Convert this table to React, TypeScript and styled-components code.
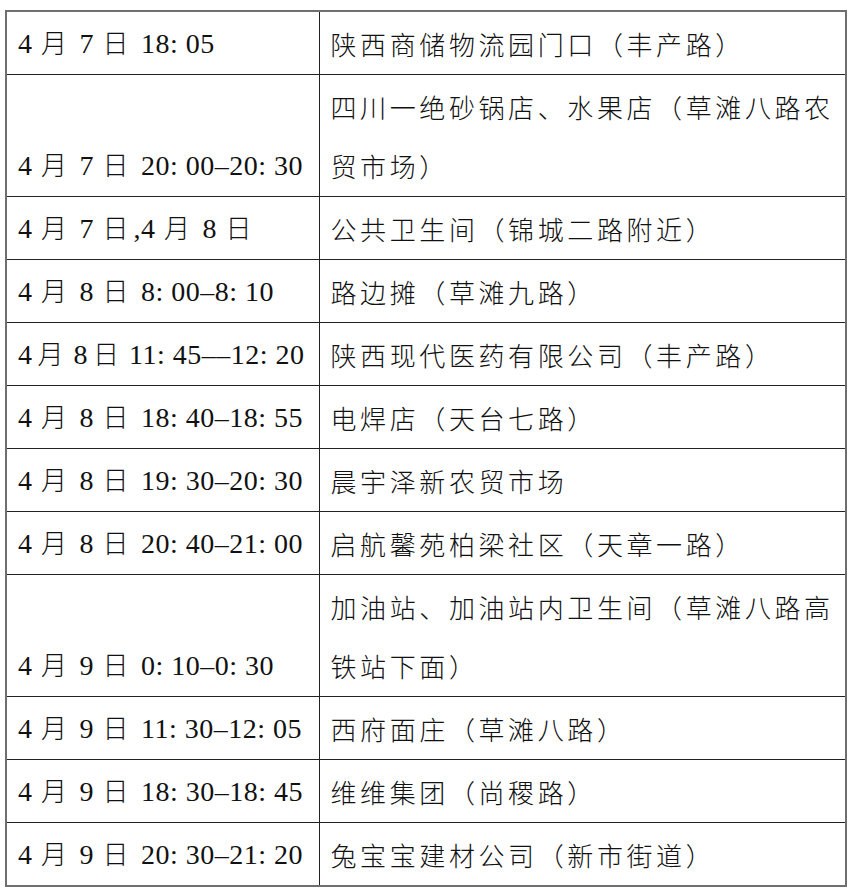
import styled, { createGlobalStyle } from "styled-components";

const rows = [
  { when: "4 月 7 日 18: 05", where: "陕西商储物流园门口（丰产路）" },
  { when: "4 月 7 日 20: 00–20: 30", where: "四川一绝砂锅店、水果店（草滩八路农贸市场）" },
  { when: "4 月 7 日,4 月 8 日", where: "公共卫生间（锦城二路附近）" },
  { when: "4 月 8 日 8: 00–8: 10", where: "路边摊（草滩九路）" },
  { when: "4月8日11: 45––12: 20", where: "陕西现代医药有限公司（丰产路）" },
  { when: "4 月 8 日 18: 40–18: 55", where: "电焊店（天台七路）" },
  { when: "4 月 8 日 19: 30–20: 30", where: "晨宇泽新农贸市场" },
  { when: "4 月 8 日 20: 40–21: 00", where: "启航馨苑柏梁社区（天章一路）" },
  { when: "4 月 9 日 0: 10–0: 30", where: "加油站、加油站内卫生间（草滩八路高铁站下面）" },
  { when: "4 月 9 日 11: 30–12: 05", where: "西府面庄（草滩八路）" },
  { when: "4 月 9 日 18: 30–18: 45", where: "维维集团（尚稷路）" },
  { when: "4 月 9 日 20: 30–21: 20", where: "兔宝宝建材公司（新市街道）" },
];

const HAN = /([\u4e00-\u9fff]+)/;

// chinese chars between digits get a little air, like word does
const renderWhen = (s: string) => {
  const parts = s.split(HAN);
  return parts.map((part, i) => {
    if (!HAN.test(part)) return part;
    const prev = parts[i - 1] ?? "";
    const next = parts[i + 1] ?? "";
    return (
      <Han key={i} $gapL={/[0-9]$/.test(prev)} $gapR={/^[0-9]/.test(next)}>
        {part}
      </Han>
    );
  });
};

export default function App() {
  return (
    <>
      <GlobalStyle />
      <Page>
        <Table>
          <colgroup>
            <col style={{ width: 313 }} />
            <col />
          </colgroup>
          <tbody>
            {rows.map((r, i) => (
              <tr key={i}>
                <When>{renderWhen(r.when)}</When>
                <Where>{r.where}</Where>
              </tr>
            ))}
          </tbody>
        </Table>
      </Page>
    </>
  );
}

const GlobalStyle = createGlobalStyle`
  body {
    margin: 0;
    background: #fff;
    color: #111;
  }
`;

const Page = styled.div`
  padding: 10px 0 0 5px;
`;

const Table = styled.table`
  width: 842px;
  table-layout: fixed;
  border-collapse: collapse;
  border: 2px solid #6f6f6f;
`;

const Cell = styled.td`
  border: 1px solid #222;
  padding: 2px 2px 1px 12px;
  line-height: 59px;
  height: 59px;
  box-sizing: content-box;
`;

const When = styled(Cell)`
  vertical-align: bottom;
  padding-left: 11px;
  font-family: "Liberation Serif", "Noto Sans CJK SC", serif;
  font-size: 28px;
  letter-spacing: 0.5px;
  white-space: nowrap;
`;

const Han = styled.span<{ $gapL: boolean; $gapR: boolean }>`
  font-family: "Noto Sans CJK SC", sans-serif;
  font-weight: 300;
  font-size: 26px;
  line-height: 0;
  letter-spacing: 5px;
  margin-left: ${(p) => (p.$gapL ? 5 : 1)}px;
  margin-right: ${(p) => (p.$gapR ? 5 : 0)}px;
`;

const Where = styled(Cell)`
  vertical-align: top;
  padding-left: 11px;
  font-family: "Noto Sans CJK SC", sans-serif;
  font-weight: 300;
  font-size: 26px;
  letter-spacing: 3.6px;
`;
